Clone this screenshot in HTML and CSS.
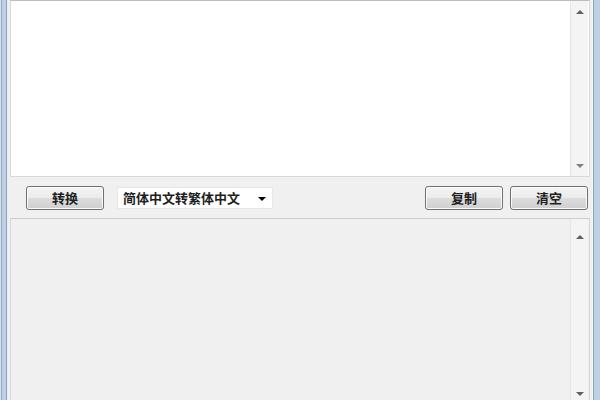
FILE: index.html
```html
<!DOCTYPE html>
<html lang="zh-CN">
<head>
<meta charset="utf-8">
<link rel="stylesheet" href="styles.css">
</head>
<body>
<div class="window">
  <div class="frame frame-left"></div>
  <div class="client">
    <div class="textbox textbox-top">
      <div class="text-area"></div>
      <div class="vscroll">
        <span class="arrow arrow-up"></span>
        <span class="arrow arrow-down"></span>
      </div>
    </div>
    <div class="toolbar">
      <button class="btn btn-convert">转换</button>
      <div class="select">
        <span class="select-text">简体中文转繁体中文</span>
        <span class="select-arrow"></span>
      </div>
      <div class="spacer"></div>
      <button class="btn">复制</button>
      <button class="btn">清空</button>
    </div>
    <div class="textbox textbox-bottom">
      <div class="text-area"></div>
      <div class="vscroll">
        <span class="arrow arrow-up"></span>
        <span class="arrow arrow-down"></span>
      </div>
    </div>
  </div>
  <div class="frame frame-right"></div>
</div>
</body>
</html>
```

FILE: styles.css
```css
html, body {
  margin: 0;
  padding: 0;
  width: 600px;
  height: 400px;
  overflow: hidden;
  background: #f0f0f0;
  font-family: "Noto Sans CJK SC", "Noto Sans", sans-serif;
}

.window {
  display: flex;
  width: 600px;
  height: 400px;
}

.frame {
  flex: 0 0 8px;
  height: 400px;
}

.frame-left {
  background: linear-gradient(to right,
    #d6dfea 0px, #d6dfea 1px,
    #93a9c4 1px, #93a9c4 2px,
    #bfd0e5 2px, #bfd0e5 6px,
    #8fa3bd 6px, #8fa3bd 7px,
    #e9eef4 7px, #e9eef4 8px);
}

.frame-right {
  background: linear-gradient(to right,
    #f6f8fa 0px, #f6f8fa 1px,
    #8fa3bd 1px, #8fa3bd 2px,
    #bfd0e5 2px, #bfd0e5 8px);
}

.client {
  flex: 1;
  display: flex;
  flex-direction: column;
  padding: 0 2px;
  background: #f0f0f0;
  overflow: hidden;
}

.textbox {
  display: flex;
  flex-shrink: 0;
  border: 1px solid #d5d8dd;
  box-sizing: border-box;
}

.textbox-top {
  height: 177px;
  background: #ffffff;
  border-top-color: #b9bcc1;
}

.textbox-bottom {
  height: 200px;
  background: #f0f0f0;
  border-top-color: #c9ccd1;
}

.text-area {
  flex: 1;
}

.vscroll {
  flex: 0 0 17px;
  position: relative;
  background: #f4f4f4;
  border-left: 1px solid #e6e6e6;
  margin-right: 1px;
}

.arrow {
  position: absolute;
  left: 5px;
  width: 0;
  height: 0;
  border-left: 4px solid transparent;
  border-right: 4px solid transparent;
}

.arrow-up {
  top: 9px;
  border-bottom: 4px solid #606060;
}

.textbox-top .arrow-down {
  top: 163px;
  border-top: 4px solid #808080;
}

.textbox-bottom .arrow-down {
  top: 173px;
  border-top: 4px solid #606060;
}

.textbox-bottom .arrow-up {
  top: 16px;
}

.toolbar {
  height: 41px;
  flex-shrink: 0;
  display: flex;
  align-items: center;
  padding: 0 2px 0 16px;
  box-sizing: border-box;
}

.btn {
  width: 78px;
  height: 24px;
  border: 1px solid #707070;
  border-radius: 3px;
  background: linear-gradient(to bottom, #f4f4f4 0%, #ebebeb 48%, #dcdcdc 52%, #cfcfcf 100%);
  box-shadow: inset 0 0 0 1px #fbfbfb;
  font-family: "Noto Sans CJK SC", sans-serif;
  font-size: 13px;
  font-weight: 600;
  color: #1e1e1e;
  padding: 0;
  margin: 0;
  line-height: 20px;
}

.btn + .btn {
  margin-left: 7px;
}

.btn-convert {
  margin-right: 13px;
}

.select {
  width: 156px;
  height: 22px;
  background: #ffffff;
  border: 1px solid #e8e8e8;
  box-sizing: border-box;
  display: flex;
  align-items: center;
  padding: 0 5px 0 5px;
}

.select-text {
  flex: 1;
  font-size: 13px;
  font-weight: 600;
  color: #1e1e1e;
  line-height: 20px;
}

.select-arrow {
  width: 0;
  height: 0;
  border-left: 4px solid transparent;
  border-right: 4px solid transparent;
  border-top: 4px solid #000000;
  margin-top: 2px;
  margin-right: 1px;
}

.spacer {
  flex: 1;
}
```
